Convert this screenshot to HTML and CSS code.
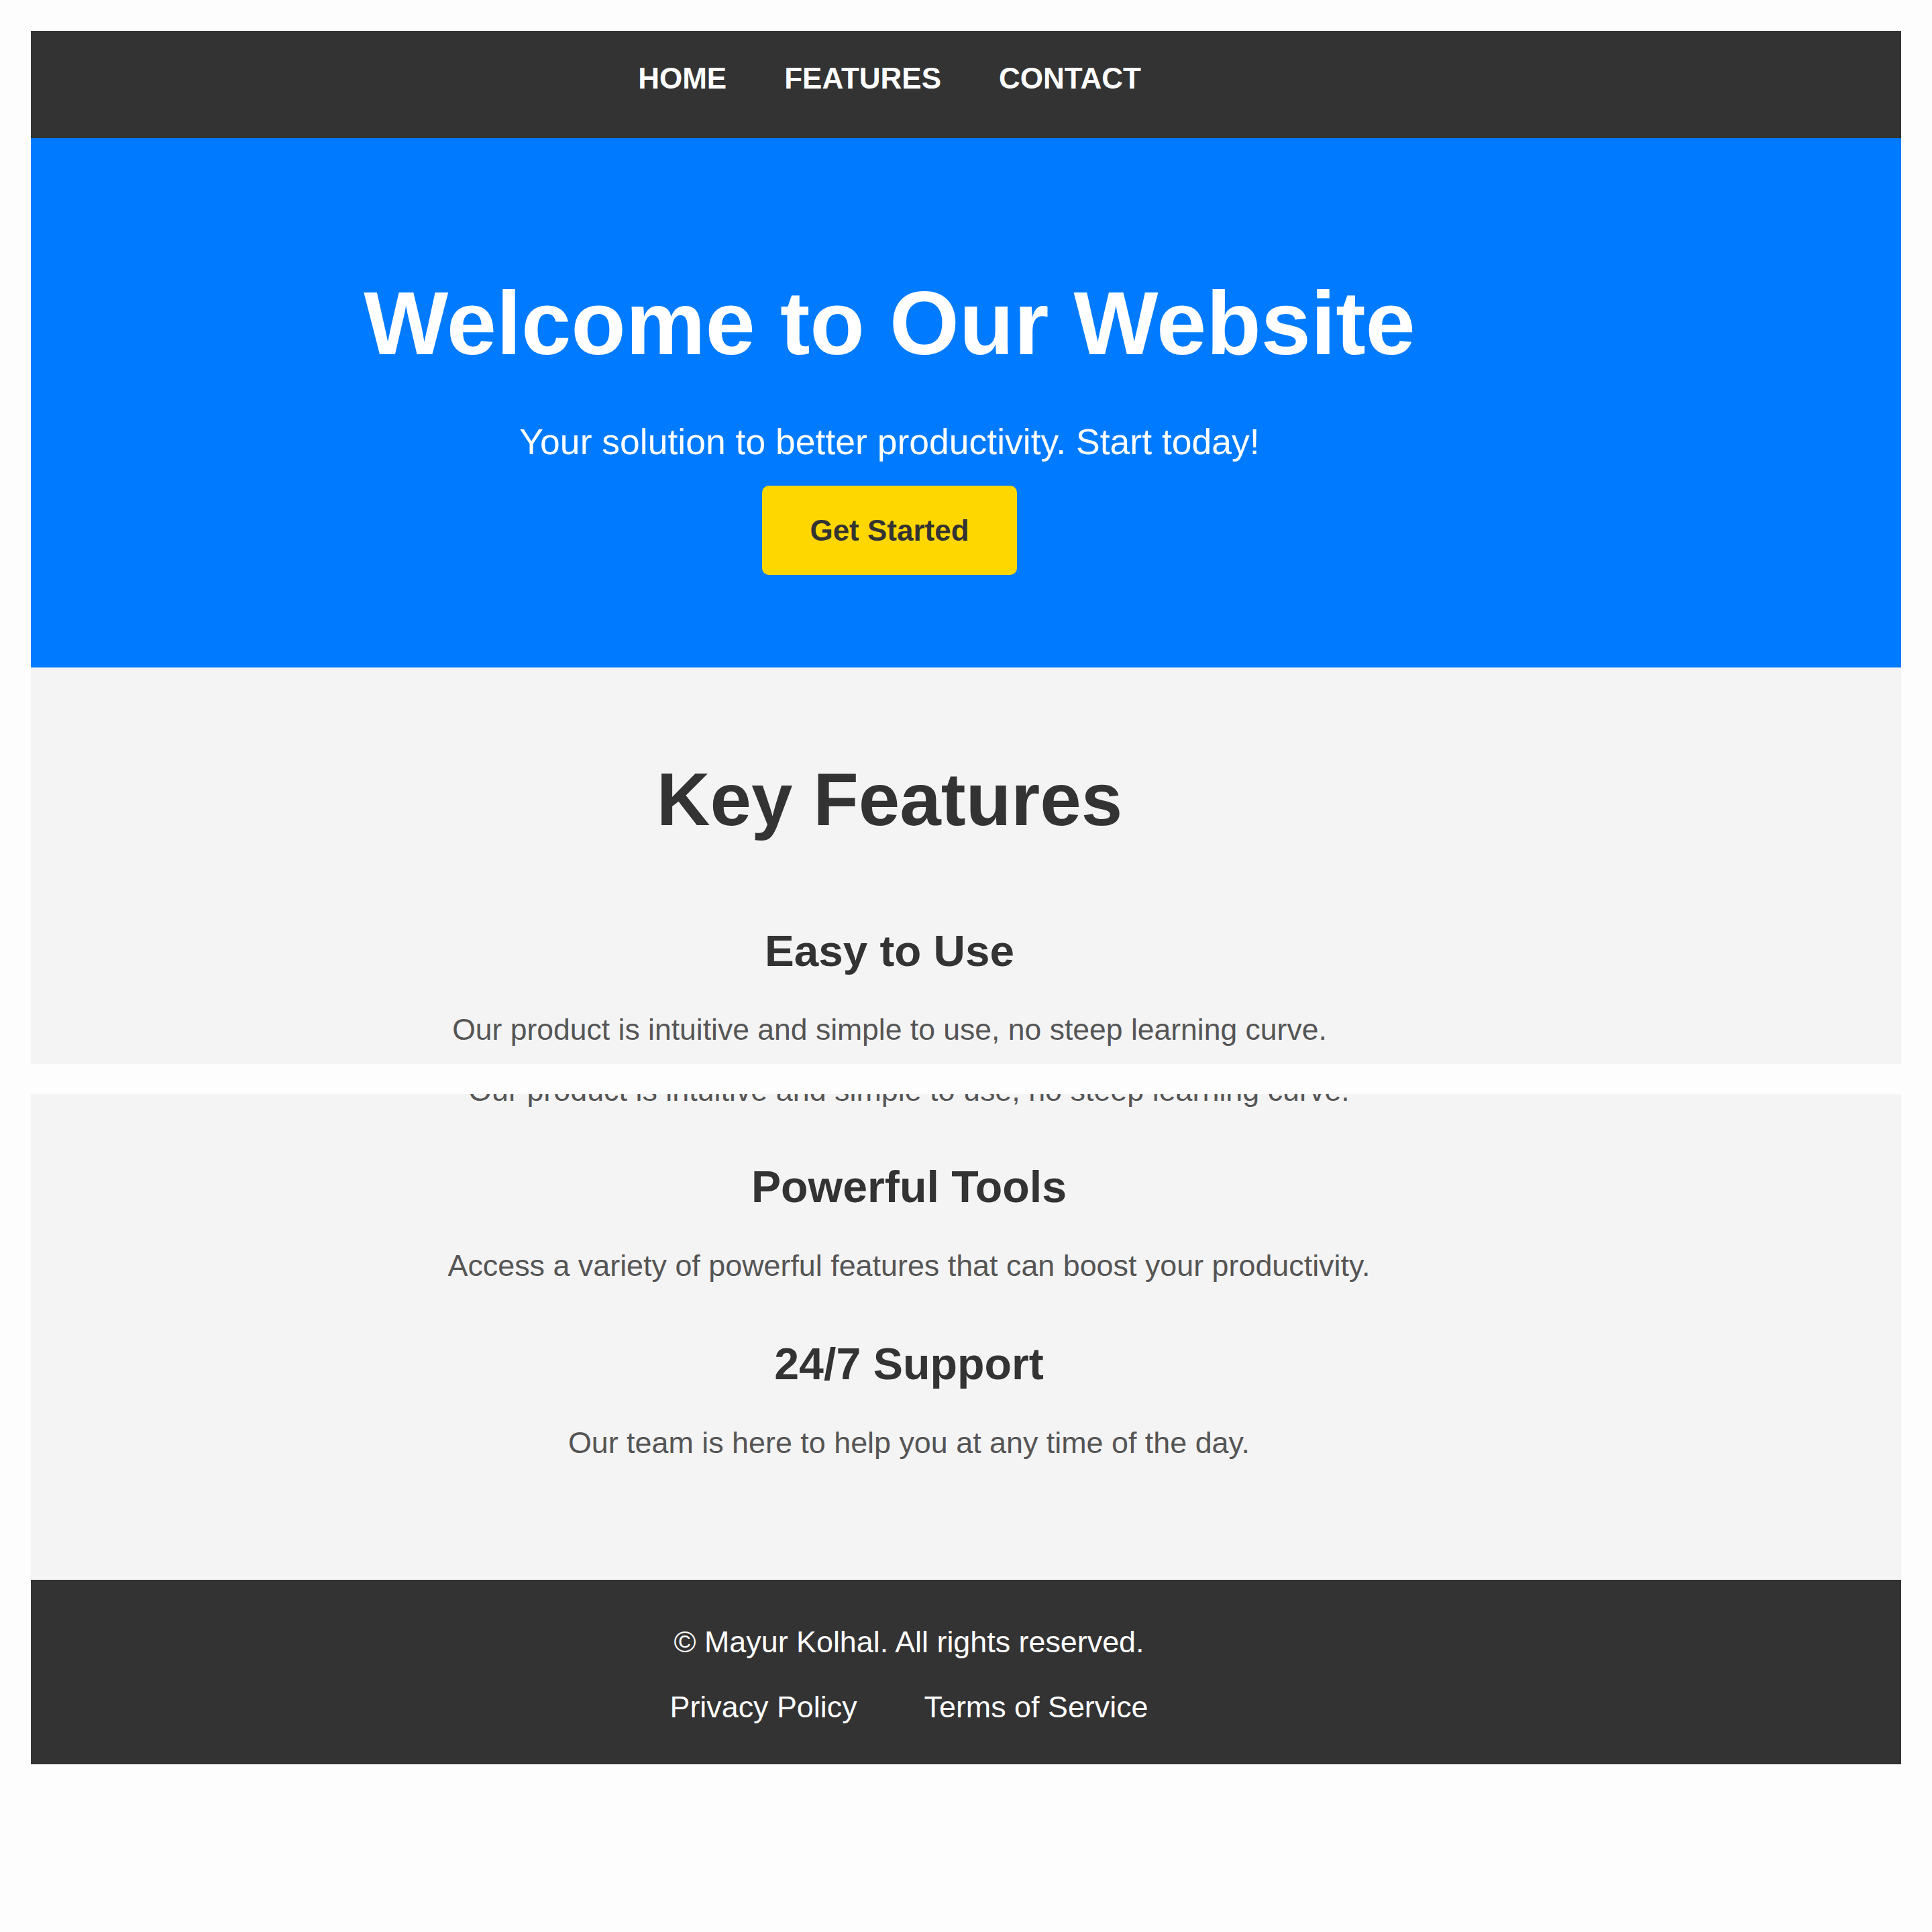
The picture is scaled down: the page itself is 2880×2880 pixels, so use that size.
FILE: index.html
```html
<!DOCTYPE html>
<html lang="en">
<head>
<meta charset="utf-8">
<title>Welcome to Our Website</title>
<link rel="stylesheet" href="styles.css">
</head>
<body>
<div class="page">
  <nav class="nav">
    <a href="#" class="nav-link">Home</a>
    <a href="#" class="nav-link">Features</a>
    <a href="#" class="nav-link">Contact</a>
  </nav>

  <header class="hero">
    <h1 class="hero-title">Welcome to Our Website</h1>
    <p class="hero-subtitle">Your solution to better productivity. Start today!</p>
    <a href="#" class="btn">Get Started</a>
  </header>

  <section class="features">
    <h2 class="features-title">Key Features</h2>
    <div class="feature">
      <h3 class="feature-title">Easy to Use</h3>
      <p class="feature-text">Our product is intuitive and simple to use, no steep learning curve.</p>
    </div>
  </section>

  <section class="features features-cont">
    <p class="feature-text feature-text-cut">Our product is intuitive and simple to use, no steep learning curve.</p>
    <div class="feature">
      <h3 class="feature-title">Powerful Tools</h3>
      <p class="feature-text">Access a variety of powerful features that can boost your productivity.</p>
    </div>
    <div class="feature">
      <h3 class="feature-title">24/7 Support</h3>
      <p class="feature-text">Our team is here to help you at any time of the day.</p>
    </div>
  </section>

  <footer class="footer">
    <p class="footer-copy">&copy; Mayur Kolhal. All rights reserved.</p>
    <div class="footer-links">
      <a href="#" class="footer-link">Privacy Policy</a>
      <a href="#" class="footer-link">Terms of Service</a>
    </div>
  </footer>
</div>
</body>
</html>
```

FILE: styles.css
```css
html, body {
  margin: 0;
  padding: 0;
  background: #fdfdfd;
}

body {
  font-family: "Liberation Sans", Arial, Helvetica, sans-serif;
  line-height: normal;
}

.page {
  margin: 46px;
}

/* NAV */
.nav {
  background: #333333;
  height: 160px;
  box-sizing: border-box;
  padding: 46px 228px 0 0;
  display: flex;
  justify-content: center;
  align-items: flex-start;
  gap: 86px;
}

.nav-link {
  color: #ffffff;
  font-size: 44px;
  font-weight: bold;
  text-transform: uppercase;
  text-decoration: none;
}

/* HERO */
.hero {
  background: #007bff;
  color: #ffffff;
  text-align: center;
  padding: 199px 228px 138px 0;
}

.hero-title {
  margin: 0 0 70px;
  font-size: 133.5px;
  font-weight: bold;
}

.hero-subtitle {
  margin: 0 0 35px;
  font-size: 53.5px;
}

.btn {
  display: block;
  width: fit-content;
  margin: 0 auto;
  background: #ffd700;
  color: #333333;
  font-size: 44px;
  font-weight: bold;
  text-decoration: none;
  padding: 41.7px 71.5px;
  border-radius: 10px;
}

/* FEATURES */
.features {
  background: #f4f4f4;
  text-align: center;
  padding: 133px 228px 26px 0;
}

.features-title {
  margin: 0 0 125px;
  font-size: 110.6px;
  font-weight: bold;
  color: #333333;
}

.feature-title {
  margin: 0 0 55px;
  font-size: 65.6px;
  font-weight: bold;
  color: #333333;
}

.feature-text {
  margin: 0;
  font-size: 44.5px;
  color: #555555;
}

.features-cont {
  margin-top: 45px;
  padding: 0 170px 178px 0;
  overflow: hidden;
}

.features-cont .feature-title {
  font-size: 66.3px;
  margin-bottom: 54px;
}

.features-cont .feature-text {
  font-size: 44.85px;
}

.features-cont .feature-text-cut {
  margin: -31px 0 79px;
}

.features-cont .feature + .feature {
  margin-top: 82px;
}

/* FOOTER */
.footer {
  background: #333333;
  color: #ffffff;
  text-align: center;
  padding: 67px 170px 59px 0;
}

.footer-copy {
  margin: 0 0 45px;
  font-size: 44.85px;
}

.footer-links {
  display: flex;
  justify-content: center;
  gap: 100px;
}

.footer-link {
  color: #ffffff;
  font-size: 44.85px;
  text-decoration: none;
}
```
